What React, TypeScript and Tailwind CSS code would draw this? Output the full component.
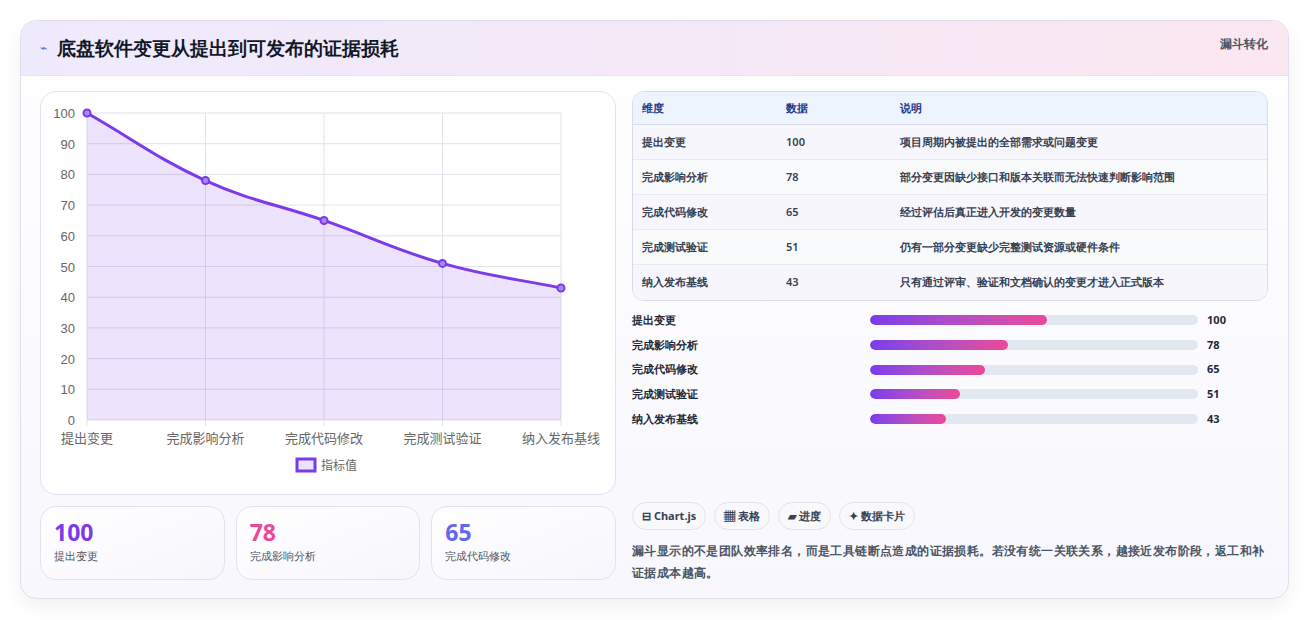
import React from "react";

const rows = [
  ["提出变更", 100, "项目周期内被提出的全部需求或问题变更"],
  ["完成影响分析", 78, "部分变更因缺少接口和版本关联而无法快速判断影响范围"],
  ["完成代码修改", 65, "经过评估后真正进入开发的变更数量"],
  ["完成测试验证", 51, "仍有一部分变更缺少完整测试资源或硬件条件"],
  ["纳入发布基线", 43, "只有通过评审、验证和文档确认的变更才进入正式版本"],
] as const;

function Chart() {
  const x0 = 48, x1 = 522, y0 = 22, y1 = 329;
  const xs = [0, 1, 2, 3, 4].map((i) => x0 + (i * (x1 - x0)) / 4);
  const y = (v: number) => y1 - ((y1 - y0) * v) / 100;
  const pts = rows.map((r, i) => [xs[i], y(r[1])]);
  let d = `M${pts[0][0]},${pts[0][1]}`;
  for (let i = 1; i < pts.length; i++) {
    const [px, py] = pts[i - 1];
    const [cx, cy] = pts[i];
    const dx = (cx - px) * 0.4;
    const s0 = i > 1 ? (cy - pts[i - 2][1]) / (cx - pts[i - 2][0]) : (cy - py) / (cx - px);
    const s1 = i < pts.length - 1 ? (pts[i + 1][1] - py) / (pts[i + 1][0] - px) : (cy - py) / (cx - px);
    d += ` C${px + dx},${py + s0 * dx} ${cx - dx},${cy - s1 * dx} ${cx},${cy}`;
  }
  return (
    <svg width="576" height="403" className="block">
      {[0, 10, 20, 30, 40, 50, 60, 70, 80, 90, 100].map((v) => (
        <g key={v}>
          <line x1={x0} x2={x1} y1={y(v)} y2={y(v)} stroke="#e2e2ea" />
          <text x={x0 - 12} y={y(v) + 5} textAnchor="end" fontSize="13" fill="#666" fontFamily="Liberation Sans, sans-serif">{v}</text>
        </g>
      ))}
      {xs.map((x, i) => (
        <line key={i} x1={x} x2={x} y1={y0} y2={y1 + 6} stroke="#e2e2ea" />
      ))}
      <path d={`${d} L${x1},${y1} L${x0},${y1} Z`} fill="#7c3aed" fillOpacity="0.14" />
      <path d={d} fill="none" stroke="#7c3aed" strokeWidth="3" />
      {pts.map(([px, py], i) => (
        <circle key={i} cx={px} cy={py} r="3.5" fill="#a78bfa" stroke="#7c3aed" strokeWidth="2" />
      ))}
      {rows.map((r, i) => (
        <text key={i} x={xs[i]} y={352} textAnchor="middle" fontSize="13" fill="#666" fontFamily="Noto Sans CJK SC, sans-serif">{r[0]}</text>
      ))}
      <rect x="258" y="368" width="18" height="12" fill="#7c3aed" fillOpacity="0.15" stroke="#7c3aed" strokeWidth="3" />
      <text x="282" y="379" fontSize="12" fill="#666" fontFamily="Noto Sans CJK SC, sans-serif">指标值</text>
    </svg>
  );
}

export default function App() {
  return (
    <div className="w-[1309px] h-[620px] bg-white p-5 pb-0 font-['Noto_Sans_CJK_SC','Noto_Sans',sans-serif]">
      <div className="rounded-2xl border border-[#e2def0] bg-gradient-to-b from-white to-[#f8f7fd] shadow-[0_8px_20px_rgba(0,0,0,0.06)] overflow-hidden h-[579px]">
        <div className="h-[55px] bg-gradient-to-r from-[#eeeafd] to-[#fbe7f1] border-b border-[#e5e2f2] flex items-start justify-between pl-[19px] pr-5">
          <div className="flex items-center gap-[10px] mt-[13px]">
            <span className="text-[12px] text-[#6366f1]">⌁</span>
            <span className="text-[19px] font-bold text-[#111827]">底盘软件变更从提出到可发布的证据损耗</span>
          </div>
          <span className="text-[12px] font-bold text-[#4b5563] mt-[14px]">漏斗转化</span>
        </div>
        <div className="flex gap-4 pl-[19px] pr-5 pt-[16px]">
          <div className="w-[577px] flex flex-col gap-[11px]">
            <div className="rounded-2xl border border-[#e4e2ee] bg-white h-[404px] overflow-hidden -mt-px"><div className="-ml-[2px] -mt-[1px]"><Chart /></div></div>
            <div className="grid grid-cols-3 gap-[11px]">
              {[["100", "text-[#7c3aed]", "提出变更"], ["78", "text-[#ec4899]", "完成影响分析"], ["65", "text-[#6366f1]", "完成代码修改"]].map(([v, c, l]) => (
                <div key={l} className="rounded-2xl border border-[#e4e2ee] bg-gradient-to-br from-white to-[#f7f6fc] h-[74px] px-[13px] pt-[9px]">
                  <div className={`text-[23px] font-bold leading-[32px] ${c}`}>{v}</div>
                  <div className="text-[11px] text-[#4b5563]">{l}</div>
                </div>
              ))}
            </div>
          </div>
          <div className="w-[637px] flex flex-col -mt-px">
            <div className="rounded-xl border border-[#d8dbea] overflow-hidden">
              <div className="flex h-[33px] items-center bg-[#eef4fe] border-b border-[#d8dbea] text-[11px] font-bold text-[#1e3a8a]">
                <div className="w-[153px] pl-[9px]">维度</div><div className="w-[114px]">数据</div><div>说明</div>
              </div>
              {rows.map((r, i) => (
                <div key={i} className={`flex h-[35px] items-center text-[11px] font-semibold text-[#374151] ${i < 4 ? "border-b border-[#e8eaf2]" : ""} ${i % 2 ? "bg-[#f9fafb]" : "bg-[#f8f6fd]"}`}>
                  <div className="w-[153px] pl-[9px]">{r[0]}</div><div className="w-[114px]">{r[1]}</div><div>{r[2]}</div>
                </div>
              ))}
            </div>
            <div className="mt-[7px] flex flex-col">
              {rows.map((r, i) => (
                <div key={i} className="flex items-center h-[24.7px] text-[11px] font-semibold text-[#1f2937]">
                  <div className="w-[238px]">{r[0]}</div>
                  <div className="w-[328px] h-[10px] rounded-full bg-[#e2e8f0] overflow-hidden">
                    <div className="h-full rounded-full bg-gradient-to-r from-[#7c3aed] to-[#ec4899]" style={{ width: `${r[1] * 0.54}%` }} />
                  </div>
                  <div className="ml-[9px] font-bold">{r[1]}</div>
                </div>
              ))}
            </div>
            <div className="flex gap-[8px] mt-[71px]">
              {["⊟ Chart.js", "▦ 表格", "▰ 进度", "✦ 数据卡片"].map((t) => (
                <span key={t} className="h-[28px] px-[9px] rounded-full border border-[#e4e2ee] bg-[#f9f9fc] text-[11px] font-bold text-[#374151] flex items-center">{t}</span>
              ))}
            </div>
            <p className="mt-[10px] text-[12px] tracking-[0.4px] leading-[22px] font-semibold text-[#4b5563]">漏斗显示的不是团队效率排名，而是工具链断点造成的证据损耗。若没有统一关联关系，越接近发布阶段，返工和补证据成本越高。</p>
          </div>
        </div>
      </div>
    </div>
  );
}
